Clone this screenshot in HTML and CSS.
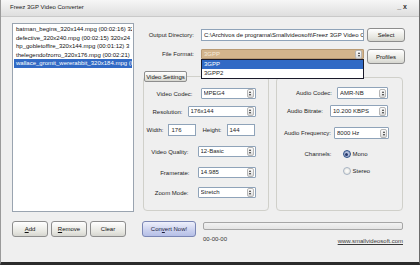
FILE: index.html
```html
<!DOCTYPE html>
<html lang="en">
<head>
<meta charset="UTF-8" />
<title>Freez 3GP Video Converter</title>
<link rel="stylesheet" href="styles.css">
</head>
<body>

<div class="window">
  <div class="titlebar">
    <span class="title">Freez 3GP Video Converter</span>
    <span class="win-controls">_&nbsp;x</span>
  </div>

  <div class="main">
    <!-- LISTA DE ARCHIVOS -->
    <div class="col-left">
      <div class="file-list">
        <div class="file-item">batman_begins_320x144.mpg (00:02:16) 32</div>
        <div class="file-item">defective_320x240.mpg (00:02:15) 320x24</div>
        <div class="file-item">hp_gobletoffire_320x144.mpg (00:01:12) 3</div>
        <div class="file-item">thelegendofzorro_320x176.mpg (00:02:21)</div>
        <div class="file-item selected">wallace_gromit_wererabbit_320x184.mpg (0</div>
      </div>
      <div class="list-buttons">
        <button class="btn"><u>A</u>dd</button>
        <button class="btn"><u>R</u>emove</button>
        <button class="btn">Clear</button>
      </div>
    </div>

    <!-- AJUSTES -->
    <div class="col-right">
      <div class="row-dir">
        <label class="lbl">Output Directory:</label>
        <div class="field dir">C:\Archivos de programa\Smallvideosoft\Freez 3GP Video C</div>
        <button class="btn side">Select</button>
      </div>

      <div class="row-format">
        <label class="lbl">File Format:</label>
        <div class="combo format">
          <span class="value">3GPP</span>
          <span class="spin"></span>
          <ul class="dropdown">
            <li class="selected">3GPP</li>
            <li>3GPP2</li>
          </ul>
        </div>
        <button class="btn side tall">Profiles</button>
      </div>

      <div class="panels">
        <fieldset class="panel video">
          <legend><button class="btn tab">Video Settings</button></legend>
          <div class="prow r-codec">
            <span>Video Codec:</span>
            <div class="combo w55"><span class="value">MPEG4</span><span class="spin"></span></div>
          </div>
          <div class="prow r-res">
            <span>Resolution:</span>
            <div class="combo w68"><span class="value">176x144</span><span class="spin"></span></div>
          </div>
          <div class="prow r-size">
            <span>Width:</span>
            <div class="field small">176</div>
            <span class="gap-left">Height:</span>
            <div class="field small">144</div>
          </div>
          <div class="prow r-quality">
            <span>Video Quality:</span>
            <div class="combo w58"><span class="value">12-Basic</span><span class="spin"></span></div>
          </div>
          <div class="prow r-rate">
            <span>Framerate:</span>
            <div class="combo w58"><span class="value">14.985</span><span class="spin"></span></div>
          </div>
          <div class="prow r-zoom">
            <span>Zoom Mode:</span>
            <div class="combo w58"><span class="value">Stretch</span><span class="spin"></span></div>
          </div>
        </fieldset>

        <fieldset class="panel audio">
          <div class="prow a-codec">
            <span>Audio Codec:</span>
            <div class="combo w51"><span class="value">AMR-NB</span><span class="spin"></span></div>
          </div>
          <div class="prow a-bitrate">
            <span>Audio Bitrate:</span>
            <div class="combo w58"><span class="value">10.200 KBPS</span><span class="spin"></span></div>
          </div>
          <div class="prow a-freq">
            <span>Audio Frequency:</span>
            <div class="combo w55"><span class="value">8000 Hz</span><span class="spin"></span></div>
          </div>
          <div class="channels">
            <span class="ch-label">Channels:</span>
            <div class="radios">
              <label class="radio checked"><span class="dot"></span>Mono</label>
              <label class="radio"><span class="dot"></span>Stereo</label>
            </div>
          </div>
        </fieldset>
      </div>

      <div class="row-convert">
        <button class="btn convert">Con<u>v</u>ert Now!</button>
        <div class="progress-box">
          <div class="progress"></div>
          <div class="footer">
            <span>00-00-00</span>
            <a href="#">www.smallvideosoft.com</a>
          </div>
        </div>
      </div>
    </div>
  </div>
</div>

</body>
</html>
```

FILE: styles.css
```css
body {
  margin: 0;
  font-family: 'Liberation Sans', Arial, sans-serif;
  font-size: 6px;
  color: #151515;
  background: #efefef;
}

/* VENTANA */
.window {
  width: 420px;
  height: 265px;
  box-sizing: border-box;
  border-left: 1px solid #9a9a9a;
  border-right: 1px solid #6c6c6c;
  border-bottom: 3px solid #2b2b2b;
  background: #efefef;
  display: flex;
  flex-direction: column;
  overflow: hidden;
}

.titlebar {
  height: 17px;
  flex-shrink: 0;
  display: flex;
  justify-content: space-between;
  align-items: flex-start;
  padding: 3px 12px 0 9px;
  box-sizing: border-box;
  background: linear-gradient(#f6f6f6, #dedede);
  border-bottom: 1px solid #c9c9c9;
  line-height: 8px;
}
.title {
  color: #222;
}
.win-controls {
  font-size: 7px;
  font-weight: 700;
  color: #333;
}

.main {
  flex: 1;
  display: flex;
  padding: 6px 14px 0 11px;
}

/* LISTA */
.col-left {
  width: 122px;
  display: flex;
  flex-direction: column;
}
.file-list {
  height: 189px;
  box-sizing: border-box;
  background: #fff;
  border: 1px solid #9aa4b0;
  padding: 1px 1px 0 1px;
  overflow: hidden;
}
.file-item {
  line-height: 8.5px;
  white-space: nowrap;
  overflow: hidden;
  padding-left: 2px;
  color: #111;
}
.file-item.selected {
  background: #316ac5;
  color: #fff;
}
.list-buttons {
  display: flex;
  gap: 3px;
  margin-top: 9px;
}

/* BOTONES */
.btn {
  font-family: inherit;
  font-size: 6px;
  color: #111;
  padding: 0;
  margin: 0;
  width: 36px;
  height: 16px;
  border: 1px solid #8d8d8d;
  border-radius: 3px;
  background: linear-gradient(#ffffff, #e6e6e0 70%, #d6d6d0);
  cursor: pointer;
}
.btn u {
  text-decoration: underline;
}
.btn.side {
  width: 38px;
  height: 14px;
  margin-left: 3px;
}
.btn.side.tall {
  height: 15px;
}
.btn.tab {
  width: 43px;
  height: 11px;
  border-radius: 2px;
}
.btn.convert {
  width: 54px;
  height: 16px;
  margin-left: 5px;
  border-color: #7a86b4;
  background: linear-gradient(#eef0fb, #c9d0ee 60%, #b5bfe6);
  color: #1c1c3c;
}

/* COLUMNA DERECHA */
.col-right {
  flex: 1;
  margin-left: 3px;
  padding-top: 5px;
  display: flex;
  flex-direction: column;
}
.lbl {
  width: 57px;
  margin-right: 7px;
  text-align: right;
  color: #1e1e1e;
}
.row-dir {
  display: flex;
  align-items: center;
  height: 14px;
}
.row-format {
  display: flex;
  align-items: flex-start;
  margin-top: 7px;
  line-height: 10px;
}

.field {
  box-sizing: border-box;
  background: #fff;
  border: 1px solid #8fa3b9;
  height: 12px;
  line-height: 10px;
  padding: 0 2px;
  white-space: nowrap;
  overflow: hidden;
}
.field.dir {
  width: 163px;
}
.field.small {
  width: 28px;
}

.combo {
  position: relative;
  display: flex;
  align-items: center;
  box-sizing: border-box;
  height: 11px;
  background: #fff;
  border: 1px solid #8fa3b9;
  border-radius: 1px;
  padding: 0 1px 0 2px;
}
.combo .value {
  flex: 1;
  white-space: nowrap;
  overflow: hidden;
  line-height: 9px;
}
.combo .spin {
  width: 5px;
  height: 7px;
  border: 1px solid #b6b6b6;
  border-radius: 2px;
  background: linear-gradient(#fdfdfd, #dadada);
  display: flex;
  flex-direction: column;
  align-items: center;
  justify-content: center;
  gap: 1px;
}
.combo .spin::before,
.combo .spin::after {
  content: "";
  border-left: 1.5px solid transparent;
  border-right: 1.5px solid transparent;
}
.combo .spin::before {
  border-bottom: 2px solid #333;
}
.combo .spin::after {
  border-top: 2px solid #333;
}

.combo.format {
  width: 163px;
  height: 10px;
  background: #d3b58d;
  border-color: #b89a74;
}
.combo.format .value {
  color: #f6ead9;
}
.dropdown {
  position: absolute;
  top: 9px;
  left: -1px;
  right: -1px;
  margin: 0;
  padding: 0;
  list-style: none;
  background: #fff;
  border: 1px solid #1a1a2a;
  z-index: 5;
}
.dropdown li {
  height: 9px;
  line-height: 9px;
  padding-left: 2px;
  color: #222;
}
.dropdown li.selected {
  background: #316ac5;
  color: #fff;
}

.w51 { width: 51px; }
.w55 { width: 55px; }
.w58 { width: 58px; }
.w68 { width: 68px; }

/* PANELES */
.panels {
  display: flex;
  gap: 7px;
  margin-top: 7px;
  margin-left: 6px;
  margin-right: 2px;
  height: 140px;
}
.panel {
  margin: 0;
  padding: 0 12px 0 0;
  min-width: 0;
  border: 1px solid #d0d0ca;
  border-radius: 4px;
  flex: 1;
}
.panel legend {
  padding: 0;
  margin: 0;
  line-height: 0;
}
.panel.audio {
  margin-top: 6px;
  padding-right: 14px;
}

.prow {
  display: flex;
  justify-content: flex-end;
  align-items: center;
  gap: 8px;
  color: #1e1e1e;
}
.r-codec { margin-top: 6px; }
.r-res { margin-top: 7px; gap: 5px; }
.r-size { margin-top: 7px; gap: 5px; margin-right: 1px; }
.r-size .gap-left { margin-left: 1px; }
.r-quality { margin-top: 10px; gap: 9px; }
.r-rate { margin-top: 10px; }
.r-zoom { margin-top: 9px; gap: 9px; }

.audio .combo {
  height: 12px;
}
.a-codec { margin-top: 9px; gap: 5px; }
.a-bitrate { margin-top: 6px; gap: 7px; }
.a-freq { margin-top: 10px; gap: 3px; margin-right: -1px; }

.channels {
  display: flex;
  align-items: flex-start;
  margin-top: 11px;
  padding-left: 28px;
  color: #1e1e1e;
}
.ch-label {
  width: 38px;
  line-height: 8px;
}
.radios {
  display: flex;
  flex-direction: column;
  gap: 9px;
}
.radio {
  display: flex;
  align-items: center;
  gap: 2px;
  line-height: 8px;
}
.radio .dot {
  width: 8px;
  height: 8px;
  box-sizing: border-box;
  border-radius: 50%;
  border: 1px solid #a8b4c4;
  background: radial-gradient(#ffffff, #dcdcd6);
  display: flex;
  align-items: center;
  justify-content: center;
}
.radio.checked .dot {
  border-color: #2c4f85;
  background: radial-gradient(#c9d3ea, #8c9cc4);
}
.radio.checked .dot::after {
  content: "";
  width: 3px;
  height: 3px;
  border-radius: 50%;
  background: #26386a;
}

/* CONVERTIR */
.row-convert {
  display: flex;
  align-items: flex-start;
  margin-top: 10px;
}
.progress-box {
  flex: 1;
  margin-left: 7px;
  margin-right: 2px;
  padding-top: 1px;
}
.progress {
  height: 8px;
  box-sizing: border-box;
  border: 1px solid #a6a6a6;
  border-radius: 2px;
  background: linear-gradient(#f2f2f2, #e4e4e4);
}
.footer {
  display: flex;
  justify-content: space-between;
  align-items: flex-start;
  margin-top: 5px;
  line-height: 8px;
  color: #333;
}
.footer a {
  margin-top: 2px;
  color: #3a3a3a;
  text-decoration: underline;
}
```
